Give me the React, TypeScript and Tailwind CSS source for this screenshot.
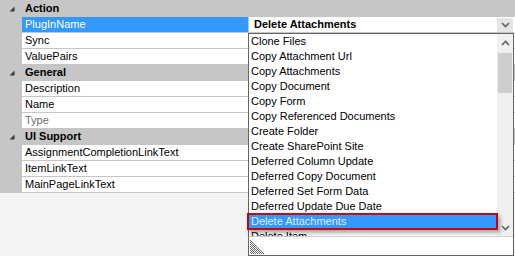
import React from "react";

const items = [
  "Clone Files",
  "Copy Attachment Url",
  "Copy Attachments",
  "Copy Document",
  "Copy Form",
  "Copy Referenced Documents",
  "Create Folder",
  "Create SharePoint Site",
  "Deferred Column Update",
  "Deferred Copy Document",
  "Deferred Set Form Data",
  "Deferred Update Due Date",
  "Delete Attachments",
  "Delete Item",
];

function Expander() {
  return (
    <svg width="6" height="6" viewBox="0 0 6 6" className="ml-[9px]">
      <polygon points="5.5,0.5 5.5,5.5 0.5,5.5" fill="#3c3c3c" />
    </svg>
  );
}

function Chevron({ up = false }: { up?: boolean }) {
  return (
    <svg width="9" height="6" viewBox="0 0 9 6">
      <polyline
        points={up ? "1,5 4.5,1.5 8,5" : "1,1 4.5,4.5 8,1"}
        fill="none"
        stroke="#606060"
        strokeWidth="1.6"
      />
    </svg>
  );
}

function Category({ label }: { label: string }) {
  return (
    <div className="flex h-4 items-center border-b border-[#c6c6c6] bg-[#c6c6c6]">
      <div className="flex w-[22px] items-center">
        <Expander />
      </div>
      <span className="pl-[3px] font-bold text-black">{label}</span>
    </div>
  );
}

function Prop({
  name,
  selected = false,
  muted = false,
  value,
}: {
  name: string;
  selected?: boolean;
  muted?: boolean;
  value?: React.ReactNode;
}) {
  return (
    <div className="flex h-4 border-b border-[#c6c6c6]">
      <div className="w-[22px] bg-[#c6c6c6]" />
      <div
        className={
          selected
            ? "w-[226px] bg-[#3399ff] pl-[3px] text-white"
            : muted
            ? "w-[226px] bg-white pl-[3px] text-[#6d6d6d]"
            : "w-[226px] bg-white pl-[3px] text-black"
        }
      >
        {name}
      </div>
      <div className="w-px bg-[#c6c6c6]" />
      <div className="flex-1 bg-white">{value}</div>
    </div>
  );
}

function ComboValue() {
  return (
    <div className="flex h-full items-start justify-between">
      <span className="pl-[5px] font-bold text-black">Delete Attachments</span>
      <div className="mr-[2px] mt-px flex h-[14px] w-4 items-center justify-center bg-[#e5e5e5]">
        <Chevron />
      </div>
    </div>
  );
}

function Grip() {
  return (
    <svg width="14" height="14" viewBox="0 0 14 14">
      {[0, 2, 4, 6, 8, 10, 12].map((k) => (
        <line
          key={k}
          x1="0"
          y1={k}
          x2={14 - k}
          y2="14"
          stroke="#6a6a6a"
          strokeWidth="1"
        />
      ))}
    </svg>
  );
}

function Dropdown() {
  return (
    <div className="absolute left-[248px] top-[33px] flex h-[223px] w-[266px] flex-col border border-[#646464] bg-white">
      <div className="flex h-[202px]">
        <div className="flex-1 overflow-hidden">
          {items.map((it) => (
            <div
              key={it}
              className={
                it === "Delete Attachments"
                  ? "h-[15px] bg-[#3399ff] pl-[2px] text-[#dfeeff]"
                  : "h-[15px] pl-[2px] text-black"
              }
            >
              {it}
            </div>
          ))}
        </div>
        <div className="flex w-4 flex-col bg-[#f0f0f0]">
          <div className="flex h-[17px] items-center justify-center">
            <Chevron up />
          </div>
          <div className="mx-px mt-[2px] h-[40px] bg-[#cdcdcd]" />
          <div className="flex-1" />
          <div className="flex h-[17px] items-center justify-center">
            <Chevron />
          </div>
        </div>
      </div>
      <div className="flex flex-1 items-end border-t border-[#d2d2d2] pb-px pl-px">
        <Grip />
      </div>
    </div>
  );
}

export default function App() {
  return (
    <div className="relative h-[256px] w-[515px] overflow-hidden bg-[#f3f3f3] font-['Liberation_Sans',Arial,sans-serif] text-[11px] leading-[15px]">
      <div className="flex flex-col border-t border-[#c6c6c6]">
        <Category label="Action" />
        <Prop name="PlugInName" selected value={<ComboValue />} />
        <Prop name="Sync" />
        <Prop name="ValuePairs" />
        <Category label="General" />
        <Prop name="Description" />
        <Prop name="Name" />
        <Prop name="Type" muted />
        <Category label="UI Support" />
        <Prop name="AssignmentCompletionLinkText" />
        <Prop name="ItemLinkText" />
        <Prop name="MainPageLinkText" />
      </div>
      <Dropdown />
      <div className="absolute left-[247px] top-[213px] h-[17px] w-[251px] border-2 border-[#c8000a] shadow-[2px_3px_4px_rgba(0,0,0,0.35)]" />
    </div>
  );
}
